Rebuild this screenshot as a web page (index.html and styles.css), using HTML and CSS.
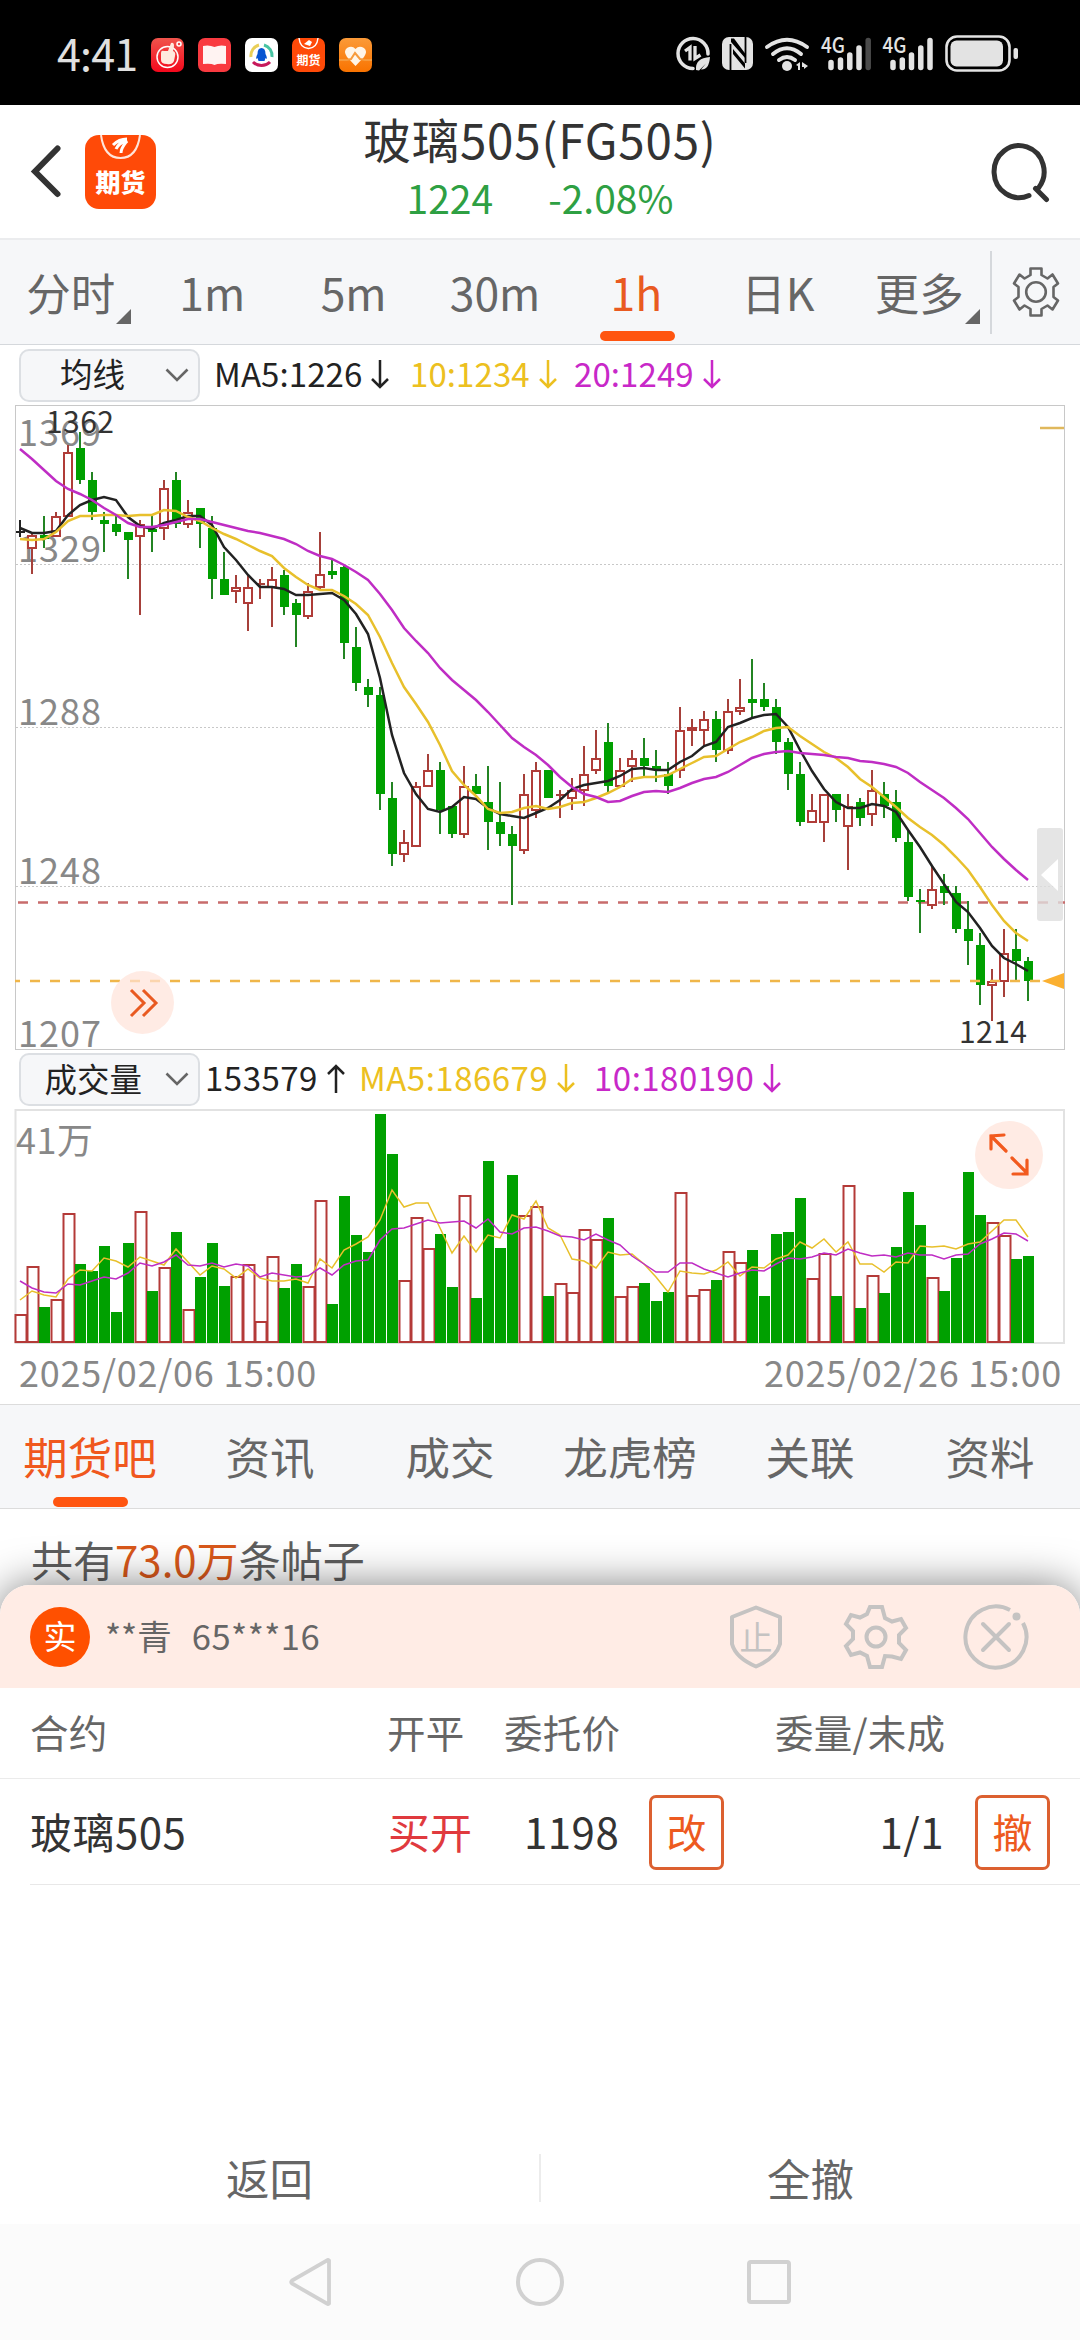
FILE: index.html
```html
<!DOCTYPE html>
<html lang="zh-CN">
<head>
<meta charset="utf-8">
<title>玻璃505(FG505)</title>
<link rel="stylesheet" href="styles.css">
</head>
<body>
<div class="statusbar">
  <span class="clock">4:41</span>
  <svg class="apps" width="222" height="34" viewBox="0 0 222 34">
    <defs>
      <linearGradient id="red" x1="0" y1="0" x2="0" y2="1"><stop offset="0" stop-color="#f0544c"/><stop offset="1" stop-color="#f4081c"/></linearGradient>
      <linearGradient id="amber" x1="0" y1="0" x2="0" y2="1"><stop offset="0" stop-color="#fb9a38"/><stop offset="1" stop-color="#f97300"/></linearGradient>
    </defs>
    <rect x="0" y="0" width="33" height="34" rx="7" fill="url(#red)"/>
    <circle cx="16.5" cy="19" r="10.500" fill="none" stroke="#fff" stroke-width="1.500"/>
    <path d="M10 15q0-3 3-2l4 0 3-8q3-1 3 3l-1 5q3 1 2 5l-1 5q-2 4-7 3-6 0-6-4z" fill="#ffeadf"/>
    <circle cx="28" cy="6" r="2" fill="none" stroke="#fff" stroke-width="1.500"/>
    <rect x="47" y="0" width="33" height="34" rx="7" fill="#f93a40"/>
    <path d="M52 8q6-1.500 11.500 1 5.500-2.500 11.500-1v18q-8-1-11.500 1-3.500-2-11.500-1z" fill="#fff3f2"/>
    <rect x="94" y="0" width="33" height="34" rx="7" fill="#fff"/>
    <path d="M100 19a11 11 0 0 1 8-12" fill="none" stroke="#e9cf58" stroke-width="3"/>
    <path d="M113 7a11 11 0 0 1 8 12" fill="none" stroke="#47c3a2" stroke-width="3"/>
    <path d="M102 24a12 12 0 0 0 17 0" fill="none" stroke="#c7195c" stroke-width="3"/>
    <path d="M110.500 10q4 0 4 6 2 4 1 5l-1-1-1 3h-6l-1-3-1 1q-1-1 1-5 0-6 4-6z" fill="#0754d1"/>
    <rect x="141" y="0" width="33" height="34" rx="7" fill="#ff4a08"/>
    <path d="M148 0q1 10 9.500 10.500Q166 10 167 0" fill="none" stroke="#fff" stroke-width="1.400"/>
    <path d="M153 6l5-4 3 2-2 4z" fill="#fff"/>
    <text x="157.500" y="27" class="app-label">期货</text>
    <rect x="188" y="0" width="33" height="34" rx="7" fill="url(#amber)"/>
    <path d="M204.500 28l-8.500-9q-4-6 0-9 5-3 8.500 1 3.500-4 8.500-1 4 3 0 9z" fill="#fff5e8"/>
    <path d="M188 22h8l4-1 4-6 5 6 5 1h7" fill="none" stroke="#f79b3c" stroke-width="2"/>
  </svg>
  <svg class="signals" width="350" height="50" viewBox="675 30 350 50">
    <g fill="none" stroke="#e3e3e3" stroke-width="3.500" stroke-linecap="round">
      <path d="M693 68.500A15 15 0 1 1 708 54"/>
      <path d="M685 51l5-3.500v13M695 46v12.500l5.500-3.500" stroke-width="3.300" stroke-linecap="butt"/>
      <path d="M767 47q20-14.500 40 0M773 54q14-11.500 28 0M779 60q8-6 16 0" stroke-width="4"/>
    </g>
    <path d="M696 70q-1-12 14-13-1 13-9 12.500l5-6-7 7z" fill="#e3e3e3"/>
    <rect x="722" y="37" width="31" height="33" rx="7" fill="#e3e3e3"/>
    <path d="M730.500 44v26M745.500 37v26" stroke="#000" stroke-width="1.800" fill="none"/>
    <path d="M731 38.500l3 0 11.500 15.500v4.500L731 42zM733 49v5l12 14.500v-5z" fill="#000"/>
    <circle cx="787" cy="66" r="5" fill="#e3e3e3"/>
    <path d="M796 65l4-3v8h-2v-4zM802 62l6 4-4 3v-2h-2z" fill="#e3e3e3"/>
    <text x="821" y="52.500" class="net" textLength="24" lengthAdjust="spacingAndGlyphs">4G</text>
    <text x="882.500" y="52.500" class="net" textLength="24" lengthAdjust="spacingAndGlyphs">4G</text>
    <g stroke="#e3e3e3" stroke-width="5.500" stroke-linecap="round">
      <path d="M831 62.500v5M840.500 60v7.500M849.800 55v12.500M859 48v19.500"/>
      <path d="M868.200 40.500v27" stroke="#4a4a4a"/>
      <path d="M893 62.500v5M902.300 60v7.500M911.500 55v12.500M920.800 48v19.500M930 40.500v27"/>
    </g>
    <rect x="946.500" y="36.500" width="63" height="34" rx="10.500" fill="none" stroke="#e3e3e3" stroke-width="2.600"/>
    <rect x="950.500" y="40.500" width="52.500" height="26" rx="6" fill="#e3e3e3"/>
    <rect x="1013.500" y="48" width="4.500" height="11" rx="2" fill="#e3e3e3"/>
  </svg>
</div>

<header class="header">
  <div class="header-side">
    <svg width="32" height="54" viewBox="0 0 32 54"><path d="M27.500 3.500L5 26.500l22.500 22.500" fill="none" stroke="#333" stroke-width="6" stroke-linecap="round"/></svg>
    <div class="logo">
      <svg width="71" height="30" viewBox="0 0 71 30"><path d="M16 0c2 15 9 23 19.500 23S53 15 55 0" fill="none" stroke="#ffe5da" stroke-width="2"/><path d="M28 10c4-4 8-6 14-6M31 14c2-5 6-7 11-9M36 18c0-5 3-8 6-12" fill="none" stroke="#fff" stroke-width="3"/></svg>
      <span>期货</span>
    </div>
  </div>
  <div class="quote">
    <h1>玻璃505(FG505)</h1>
    <div class="quote-nums"><span>1224</span><span>-2.08%</span></div>
  </div>
  <div class="header-side right">
    <svg width="62" height="62" viewBox="0 0 62 62"><path d="M39 54.500A25 26 0 1 1 48.500 47M45.500 47.500L56.500 58.500" fill="none" stroke="#333" stroke-width="5" stroke-linecap="round"/></svg>
  </div>
</header>

<nav class="periods">
  <span class="period">分时<i class="corner"></i></span>
  <span class="period">1m</span>
  <span class="period">5m</span>
  <span class="period">30m</span>
  <span class="period active">1h</span>
  <span class="period">日K</span>
  <span class="period">更多<i class="corner"></i></span>
  <span class="period-set">
    <svg width="48" height="52" viewBox="-24 -26 48 52"><path d="M-5.500-23.500h11v6.500l6 3.500 5-4 5.500 9-4.500 3.500v10l4.500 3.500-5.500 9-5-4-6 3.500v6.500h-11v-6.500l-6-3.500-5 4-5.500-9 4.500-3.500v-10l-4.500-3.500 5.500-9 5 4 6-3.500z" fill="none" stroke="#666" stroke-width="2.600" stroke-linejoin="round"/><circle r="9.800" fill="none" stroke="#666" stroke-width="2.600"/></svg>
  </span>
</nav>

<div class="indicator">
  <span class="select"><span>均线</span><svg width="24" height="15" viewBox="0 0 24 15"><path d="M1.500 1.500L12 12 22.500 1.500" fill="none" stroke="#666" stroke-width="2.600"/></svg></span>
  <span class="val ma5 v1">MA5:1226<svg class="arr" viewBox="0 0 18 29"><path d="M9 0v27M1 19l8 8 8-8"/></svg></span>
  <span class="val ma10 v2">10:1234<svg class="arr" viewBox="0 0 18 29"><path d="M9 0v27M1 19l8 8 8-8"/></svg></span>
  <span class="val ma20">20:1249<svg class="arr" viewBox="0 0 18 29"><path d="M9 0v27M1 19l8 8 8-8"/></svg></span>
</div>

<div class="chart">
  <svg id="price" width="1080" height="648" viewBox="0 403 1080 648"></svg>
  <button class="round ff"><svg width="32" height="32" viewBox="0 0 32 32"><path d="M4 3l13 13-13 13M16 3l13 13-13 13" fill="none" stroke="#e95a21" stroke-width="3"/></svg></button>
  <div class="drawer"><svg width="17" height="32" viewBox="0 0 17 32"><path d="M0 16L17 0v32z" fill="#fff"/></svg></div>
</div>

<div class="indicator vol">
  <span class="select"><span>成交量</span><svg width="24" height="15" viewBox="0 0 24 15"><path d="M1.500 1.500L12 12 22.500 1.500" fill="none" stroke="#666" stroke-width="2.600"/></svg></span>
  <span class="val ma5 v3">153579<svg class="arr" viewBox="0 0 18 29"><path d="M9 29V2M1 10l8-8 8 8"/></svg></span>
  <span class="val ma10 v4">MA5:186679<svg class="arr" viewBox="0 0 18 29"><path d="M9 0v27M1 19l8 8 8-8"/></svg></span>
  <span class="val ma20">10:180190<svg class="arr" viewBox="0 0 18 29"><path d="M9 0v27M1 19l8 8 8-8"/></svg></span>
</div>

<div class="chart">
  <svg id="volume" width="1080" height="238" viewBox="0 1108 1080 238"></svg>
  <button class="round full"><svg width="42" height="44" viewBox="0 0 42 44"><path d="M18 18L3 3M3 16V3l13-1M24 25l15 15M25 41h14V27" fill="none" stroke="#f25a1e" stroke-width="3.200" stroke-linecap="round"/></svg></button>
</div>
<div class="dates"><span>2025/02/06 15:00</span><span>2025/02/26 15:00</span></div>

<nav class="tabs">
  <span class="tab active">期货吧</span><span class="tab">资讯</span><span class="tab">成交</span><span class="tab">龙虎榜</span><span class="tab">关联</span><span class="tab">资料</span>
</nav>
<p class="posts">共有<b>73.0万</b>条帖子</p>

<section class="sheet">
  <div class="account">
    <span class="badge">实</span>
    <span class="holder">**青</span>
    <span class="acct">65***16</span>
    <div class="account-icons">
      <svg class="shield" width="54" height="64" viewBox="0 0 54 64"><path d="M27 2.500L51 12v27q-4 14-24 22.500Q7 53 3 39V12z" fill="none" stroke="#c5c3c2" stroke-width="4" stroke-linejoin="round"/><text x="27" y="45" class="stop">止</text></svg>
      <svg width="64" height="64" viewBox="-32 -32 64 64"><path d="M-6-30H6l3 11 7 3.500 9-2.500 5 9-7 7v8l7 7-5 9-9-2.500L9 19l-3 11H-6l-3-11-7-3.500-9 2.500-5-9 7-7v-8l-7-7 5-9 9 2.500 7-3.500z" fill="none" stroke="#c5c3c2" stroke-width="4"/><circle r="9.500" fill="none" stroke="#c5c3c2" stroke-width="4"/></svg>
      <svg width="68" height="68" viewBox="-34 -34 68 68"><path d="M14-27A30.500 30.500 0 1 0 27-14" fill="none" stroke="#c5c3c2" stroke-width="4"/><circle cx="20.500" cy="-20.500" r="4" fill="#c5c3c2"/><path d="M-13-13L13 13M13-13L-13 13" stroke="#c5c3c2" stroke-width="4" stroke-linecap="round"/></svg>
    </div>
  </div>
  <div class="row head"><span>合约</span><span class="dir">开平</span><span class="px">委托价</span><span class="qty">委量/未成</span></div>
  <div class="row order"><span>玻璃505</span><span class="dir">买开</span><span class="px">1198</span><button>改</button><span class="qty">1/1</span><button>撤</button></div>
  <div class="footer"><span>返回</span><i></i><span>全撤</span></div>
</section>

<div class="navbar">
  <svg width="46" height="52" viewBox="0 0 46 52"><path d="M41 4.500v43q-1 1-2 0L4 27.500q-1.500-1.500 0-3L39 4.500q1-1 2 0z" fill="none" stroke="#d1d1d1" stroke-width="3.800"/></svg>
  <svg width="50" height="50" viewBox="0 0 50 50"><circle cx="25" cy="25" r="22" fill="none" stroke="#d1d1d1" stroke-width="4"/></svg>
  <svg width="46" height="46" viewBox="0 0 46 46"><rect x="3" y="3" width="40" height="40" rx="2" fill="none" stroke="#d1d1d1" stroke-width="4"/></svg>
</div>
<script src="chart.js"></script>
</body>
</html>
```

FILE: styles.css
```css
* { box-sizing: border-box; }
body {
  margin: 0;
  width: 1080px;
  height: 2340px;
  overflow: hidden;
  background: #fff;
  color: #333;
  font-family: "Noto Sans CJK SC", "Noto Sans", sans-serif;
  display: flex;
  flex-direction: column;
}
body > * { flex: none; }
svg { display: block; flex: none; overflow: visible; }
span, h1, p { white-space: nowrap; }
button { padding: 0; font-family: inherit; background: none; }

.statusbar { height: 105px; background: #000; display: flex; align-items: center; padding: 4px 55px 0 57px; }
.clock { color: #e0e0e0; font-size: 43px; width: 94px; letter-spacing: -0.8px; line-height: 60px; padding-bottom: 6px; }
.signals { margin-left: auto; }
.app-label { font-size: 12px; font-weight: 700; fill: #fff; text-anchor: middle; }
.net { font-size: 21px; font-weight: 500; fill: #e3e3e3; }

.header { height: 135px; border-bottom: 2px solid #ebecee; display: flex; justify-content: space-between; }
.header-side { width: 200px; display: flex; align-items: center; padding-left: 30px; gap: 23px; }
.header-side.right { justify-content: flex-end; padding: 0 28px 0 0; }
.logo { width: 71px; height: 74px; border-radius: 14px; background: #ff4a08; color: #fff; display: flex; flex-direction: column; align-items: center; }
.logo span { font-size: 25px; font-weight: 900; line-height: 32px; }
.quote { text-align: center; }
.quote h1 { margin: 1px 0 0; font-weight: 400; font-size: 47.500px; line-height: 66px; letter-spacing: 0.800px; }
.quote-nums { display: flex; gap: 55px; justify-content: center; color: #2ea043; font-size: 39px; line-height: 50px; }

.periods { height: 105px; background: #f6f7f9; border-bottom: 1.500px solid #d5d8dc; display: flex; align-items: center; color: #666; font-size: 44.500px; }
.period { position: relative; width: 141.500px; height: 103px; line-height: 101px; text-align: center; }
.period.active { color: #e95a21; }
.period.active::after { content: ""; position: absolute; left: 34px; bottom: 3px; width: 75px; height: 10px; border-radius: 5px; background: #ff5510; }
.corner { position: absolute; right: 10px; bottom: 20px; border-left: 15px solid transparent; border-bottom: 15px solid #666; }
.period-set { width: 90px; height: 83px; margin-left: auto; border-left: 2px solid #d5d8dc; display: flex; justify-content: center; align-items: center; }

.indicator { height: 58px; padding: 2px 19px 0; display: flex; align-items: center; font-size: 33px; line-height: 50px; }
.indicator.vol { height: 57px; padding-top: 0; }
.select { width: 181px; height: 53px; border: 2px solid #dcdfe3; border-radius: 10px; background: #f6f7f9; color: #222; font-size: 32.500px; display: flex; align-items: center; justify-content: flex-end; gap: 40px; padding-right: 9px; }
.select span { margin-top: -4px; }
.vol .select { gap: 23px; }
.val { display: flex; align-items: center; gap: 9px; height: 50px; padding-bottom: 5px; letter-spacing: 0.100px; }
.v1 { width: 196px; margin-left: 14px; }
.v2 { width: 164px; }
.vol .val { letter-spacing: 0.500px; }
.v3 { width: 154px; margin-left: 5px; }
.v4 { width: 235px; }
.arr { width: 18px; height: 29px; margin-top: 3px; fill: none; stroke: currentColor; stroke-width: 2.500; }
.ma5 { color: #222; }
.ma10 { color: #ecc020; }
.ma20 { color: #c828c8; }

.chart { position: relative; }
.axis { font-size: 36px; fill: #888; }
.mark { font-size: 30px; fill: #333; }
.round { position: absolute; border: 0; border-radius: 50%; background: rgba(255, 226, 216, 0.7); display: flex; align-items: center; justify-content: center; }
.ff { left: 111px; top: 568px; width: 63px; height: 63px; }
.full { left: 975px; top: 13px; width: 68px; height: 68px; }
.drawer { position: absolute; left: 1037px; top: 425px; width: 26px; height: 93px; border-radius: 3px; background: rgba(222, 222, 222, 0.8); display: flex; align-items: center; padding-left: 4px; }
.dates { height: 58px; display: flex; justify-content: space-between; padding: 0 18px 0 19px; color: #888; font-size: 36px; line-height: 50px; letter-spacing: 0.750px; }

.tabs { height: 105px; background: #f6f7f9; border-top: 1.500px solid #dcdcdc; border-bottom: 1.500px solid #dcdcdc; display: grid; grid-template-columns: repeat(6, 1fr); color: #666; font-size: 44.500px; line-height: 102px; text-align: center; }
.tab { position: relative; }
.tab.active { color: #f0581e; }
.tab.active::after { content: ""; position: absolute; left: 53px; top: 92px; width: 75px; height: 10px; border-radius: 5px; background: #ff5510; }
.posts { margin: 0; height: 76px; padding: 0 31px; color: #5e5e5e; font-size: 42px; line-height: 99px; }
.posts b { font-weight: 400; color: #d9581a; }

.sheet { position: relative; height: 639px; border-radius: 30px 30px 0 0; background: #fff; box-shadow: 0 0 42px rgba(0, 0, 0, 0.5); display: flex; flex-direction: column; }
.account { height: 103px; border-radius: 30px 30px 0 0; background: #ffece5; display: flex; align-items: center; padding: 0 50px 0 30px; color: #666; font-size: 34.500px; }
.badge { width: 60px; height: 60px; border-radius: 50%; background: #ff5000; color: #fff; line-height: 56px; text-align: center; font-size: 33px; }
.holder { margin-left: 15px; padding-bottom: 4px; }
.acct { margin-left: 20px; padding-bottom: 4px; letter-spacing: 0.500px; }
.account-icons { margin-left: auto; display: flex; align-items: center; gap: 54px; }
.shield { margin-right: 7px; }
.stop { font-size: 33px; fill: #c5c3c2; text-anchor: middle; }
.row { display: grid; align-items: center; padding: 0 30px; }
.row span { padding-bottom: 4px; }
.head { height: 91px; border-bottom: 1.500px solid #ebebeb; color: #666; font-size: 38.500px; letter-spacing: 0.200px; grid-template-columns: 357px 117px 271px 1fr; }
.order { height: 106px; font-size: 42px; letter-spacing: 0.500px; grid-template-columns: 358px 136px 125px 75px 220px 106px; position: relative; }
.order::after { content: ""; position: absolute; left: 30px; right: 0; bottom: 0; height: 1px; background: #e8e8e8; }
.order .dir { color: #e03a3e; letter-spacing: 0; }
.order .qty { text-align: right; }
.order button { height: 75px; width: 75px; border: 3px solid #dc6030; border-radius: 7px; color: #ed5a20; font-size: 40px; line-height: 64px; padding-bottom: 3px; }
.order button:last-child { justify-self: end; }
.footer { margin-top: auto; height: 90px; display: grid; grid-template-columns: 1fr 2px 1fr; align-items: start; text-align: center; color: #666; font-size: 43.500px; line-height: 87px; }
.footer i { height: 48px; margin-top: 20px; background: #ececec; }

.navbar { position: relative; flex: 1; background: #fbfbfb; display: flex; justify-content: center; align-items: center; gap: 181px; }
```

FILE: chart.js
```js
// One hourly bar per entry: colour (r up, g down, k flat), high, body top, body bottom, low, volume top.
const bars = `k520,532,532,537,1314 r532,535,548,574,1266 g516,535,539,548,1307 r512,516,536,537,1299 r445,452,516,516,1213
g432,448,480,484,1264 g472,480,512,520,1271 g512,520,524,552,1246 g515,524,532,536,1312 g532,532,540,579,1243
r520,524,536,615,1211 g516,529,532,552,1291 r480,488,528,540,1267 g472,480,524,528,1232 r500,512,524,528,1309
g508,508,524,548,1277 g516,528,579,599,1243 g552,579,595,595,1286 r575,587,591,603,1276 r575,587,603,631,1264
r579,583,583,599,1321 r567,579,587,627,1256 g570,575,607,615,1288 g599,603,615,647,1264 r583,591,616,619,1286
r532,574,587,590,1200 g560,571,575,579,1304 g566,567,643,659,1196 g627,647,683,691,1235 g679,687,695,707,1252
g687,695,794,810,1114 g782,798,854,866,1154 r830,842,854,862,1280 r782,786,846,846,1217 r754,770,786,787,1248
g762,770,810,834,1234 g806,806,834,838,1287 r766,786,834,838,1195 g774,786,794,794,1298 g766,802,822,850,1161
g782,822,834,846,1248 g826,834,846,905,1175 r774,794,850,854,1215 r762,770,810,818,1206 g770,770,798,798,1296
r790,794,794,818,1283 r778,790,798,810,1292 r746,774,790,806,1229 r730,758,770,774,1239 g723,742,786,793,1218
r758,770,786,786,1296 r750,758,766,782,1286 g738,758,766,778,1283 g750,766,770,782,1301 g762,774,786,794,1292
r707,730,770,778,1192 r719,727,730,746,1295 r711,719,730,746,1289 g711,719,750,762,1280 r699,711,750,754,1251
r679,707,711,715,1262 g659,699,703,718,1250 g683,699,707,711,1296 g699,707,742,754,1234 g738,742,774,790,1232
g762,774,822,826,1198 r794,810,822,822,1278 r794,794,822,842,1253 g794,794,810,822,1296 r794,806,826,870,1185
g798,802,818,826,1308 r770,790,814,826,1275 g782,794,806,818,1293 g790,802,838,842,1247 g830,842,897,901,1192
g889,900,902,933,1225 r866,889,905,909,1277 g874,886,893,905,1291 g886,893,929,933,1258 g901,929,941,965,1172
g933,945,985,1005,1215 r969,981,985,1021,1222 r929,953,981,997,1235 g929,949,961,981,1259 g957,961,981,1001,1256`
  .split(/\s+/).map(s => [s[0], ...s.slice(1).split(',').map(Number)]);

const priceMA = {
  '#222': '528 533 533 531 515 505 500 497 500 517 526 529 523 520 516 516 525 547 560 575 587 587 589 595 595 594 593 600 614 634 678 735 773 794 809 812 807 797 799 808 814 816 818 813 808 800 789 785 783 781 776 769 768 770 770 762 756 746 742 727 723 718 715 714 727 750 771 789 802 808 808 804 806 812 830 847 866 884 902 912 928 946 958 964 971',
  '#e8c02c': '539 540 539 532 521 516 516 515 515 516 515 515 510 511 517 521 528 534 539 545 551 556 568 577 585 590 590 596 604 615 637 663 687 704 722 745 771 785 796 809 813 812 808 806 809 807 803 802 798 793 787 779 777 777 775 769 763 757 756 749 742 737 731 728 727 736 744 752 758 767 779 787 797 807 818 827 835 845 857 870 887 905 921 933 941',
  '#bf2dc4': '449 459 470 481 489 494 500 508 515 523 527 527 525 522 519 519 522 525 528 531 533 536 539 544 551 556 559 565 572 580 594 610 628 641 653 668 680 690 700 712 725 738 747 755 765 777 787 794 797 802 801 796 792 791 792 788 783 779 777 772 765 758 754 752 751 753 754 755 757 758 761 762 764 767 773 782 790 798 808 819 833 847 859 870 880'
};
const volumeMA = {
  '#e8c02c': '1300 1291 1295 1297 1279 1270 1271 1258 1261 1267 1257 1261 1265 1249 1262 1275 1266 1269 1278 1269 1278 1281 1281 1279 1283 1259 1268 1250 1244 1237 1220 1190 1207 1203 1203 1228 1253 1236 1252 1235 1238 1215 1219 1201 1228 1235 1259 1261 1268 1252 1255 1254 1264 1277 1292 1271 1273 1274 1270 1262 1276 1267 1268 1259 1255 1242 1248 1239 1252 1242 1264 1264 1272 1262 1263 1246 1247 1246 1249 1244 1242 1231 1220 1220 1237',
  '#bf2dc4': '1281 1288 1292 1293 1284 1285 1281 1277 1279 1273 1263 1266 1262 1255 1265 1266 1263 1267 1264 1266 1277 1273 1275 1277 1276 1268 1275 1265 1261 1260 1240 1229 1228 1224 1220 1223 1222 1221 1228 1219 1232 1234 1228 1227 1231 1236 1237 1240 1234 1240 1245 1256 1264 1272 1272 1263 1263 1269 1273 1277 1273 1270 1271 1264 1258 1259 1257 1253 1255 1249 1253 1256 1255 1257 1253 1255 1255 1259 1255 1254 1244 1239 1233 1234 1241'
};

const x = i => 20 + 12 * i;
const rect = (l, t, w, h, attrs) => `<rect x="${l}" y="${t}" width="${w}" height="${h}" ${attrs}/>`;
const line = (x1, y1, x2, y2, attrs) => `<path d="M${x1} ${y1}L${x2} ${y2}" fill="none" ${attrs}/>`;
const averages = (set, width) => Object.entries(set).map(([color, ys]) =>
  `<polyline points="${ys.split(' ').map((y, i) => x(i) + ',' + y).join(' ')}" fill="none" stroke="${color}" stroke-width="${width}"/>`).join('');
const text = (tx, ty, cls, len, s) => `<text x="${tx}" y="${ty}" class="${cls}" textLength="${len}">${s}</text>`;

let p = rect(15.5, 405.5, 1049, 644, 'fill="none" stroke="#c8c8c8"');
p += [564.5, 727.5, 886.5].map(y => line(16, y, 1064, y, 'stroke="#c8c8c8" stroke-dasharray="2 2"')).join('');
p += [[446, 1369], [562, 1329], [725, 1288], [884, 1248], [1047, 1207]].map(([y, s]) => text(18, y, 'axis', 83, s)).join('');
p += line(18, 902.5, 1065, 902.5, 'stroke="#c86c6c" stroke-width="2.5" stroke-dasharray="10 10"');
bars.forEach(([c, hi, top, bottom, lo], i) => {
  const cx = x(i);
  if (c === 'k') {
    p += line(cx, hi, cx, lo, 'stroke="#222" stroke-width="2"') + line(cx - 4, 532, cx + 5, 532, 'stroke="#222" stroke-width="2"');
  } else if (c === 'g') {
    p += line(cx, hi, cx, lo, 'stroke="#238423" stroke-width="2"') + rect(cx - 4, top, 9, bottom - top, 'fill="#00a000"');
  } else {
    const s = 'stroke="#a6403a" stroke-width="2"';
    p += line(cx, hi, cx, top, s) + line(cx, bottom, cx, lo, s);
    p += bottom === top ? line(cx - 4, top + 1, cx + 5, top + 1, s) : rect(cx - 4, top + 1, 8, Math.max(bottom - top - 1, 2), 'fill="#fff" stroke="#b03c38" stroke-width="2"');
  }
});
p += averages(priceMA, 2.5);
p += line(15, 981, 20, 981, 'stroke="#f0b64a" stroke-width="2.5"') + line(30, 981, 1042, 981, 'stroke="#f0b64a" stroke-width="2.5" stroke-dasharray="10 10"');
p += '<path d="M1042 981L1064 973v16z" fill="#fbb030"/>' + line(1040, 428, 1064, 428, 'stroke="#e0b85c" stroke-width="2.5"');
p += text(46, 433, 'mark', 68, '1362') + text(959, 1043, 'mark', 68, '1214');
document.getElementById('price').innerHTML = p;

let v = rect(15.5, 1110, 1048.5, 233, 'fill="none" stroke="#e2e2e2" stroke-width="2"') + text(16, 1154, 'axis', 77, '41万');
bars.forEach(([c, , , , , top], i) => {
  const cx = x(i);
  v += c === 'g' ? rect(cx - 5, top, 11, 1343 - top, 'fill="#00a000"')
    : rect(cx - 4.5, top + 1, 11, 1341 - top, 'fill="#fff" stroke="#b43a38" stroke-width="2"');
});
v += averages(volumeMA, 1.5);
document.getElementById('volume').innerHTML = v;
```
